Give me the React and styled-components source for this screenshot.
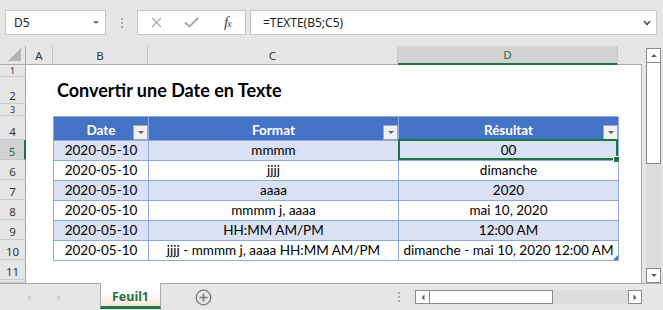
import styled, { createGlobalStyle } from 'styled-components';

const GlobalStyle = createGlobalStyle`
  html, body { margin: 0; padding: 0; background: #e6e6e6; }
  body { font-family: "Noto Sans", "Liberation Sans", sans-serif; overflow: hidden; }
`;

const Window = styled.div`
  width: 663px;
  height: 310px;
  display: flex;
  flex-direction: column;
  background: #e6e6e6;
  overflow: hidden;
`;

/* ---------- formula bar ---------- */

const FormulaBar = styled.div`
  height: 46px;
  box-sizing: border-box;
  padding: 10px 6px 0 5px;
  display: flex;
  align-items: flex-start;
`;

const Field = styled.div`
  height: 25px;
  box-sizing: border-box;
  background: #fff;
  border: 1px solid #c6c6c6;
  display: flex;
  align-items: center;
  font-size: 12px;
  color: #222;
`;

const NameBox = styled(Field)`
  width: 101px;
  padding: 0 6px 0 8px;
  justify-content: space-between;
`;

const DropTri = styled.span`
  width: 0;
  height: 0;
  border-left: 3px solid transparent;
  border-right: 3px solid transparent;
  border-top: 3px solid #707070;
`;

const Grip = styled.div`
  width: ${p => p.$w || 31}px;
  height: ${p => p.$h || 25}px;
  display: flex;
  flex-direction: column;
  align-items: center;
  justify-content: center;
  gap: 2px;
`;

const Dot = styled.span`
  width: 2px;
  height: 2px;
  background: #ababab;
`;

const FxBox = styled(Field)`
  width: 109px;
  padding-left: 1px;
`;

const Slot = styled.span`
  width: 36px;
  display: flex;
  align-items: center;
  justify-content: center;
`;

const Fx = styled.span`
  font-family: "Liberation Serif", serif;
  font-style: italic;
  font-size: 15px;
  color: #444;
  letter-spacing: -1px;
  sub {
    font-size: 10px;
    vertical-align: 0;
  }
`;

const FormulaInput = styled(Field)`
  flex: 1;
  margin-left: 4px;
  padding: 0 5px 0 12px;
  justify-content: space-between;
`;

/* ---------- sheet ---------- */

const Main = styled.div`
  display: flex;
  height: 237px;
`;

const Sheet = styled.div`
  width: 642px;
  display: grid;
  grid-template-columns: 26px 27px 95px 250px 220px 24px;
  grid-template-rows: 19px 12px 27px 12px 24px repeat(7, 20px) 3px;
`;

const Corner = styled.div`
  grid-column: 1;
  grid-row: 1;
  box-sizing: border-box;
  border-right: 1px solid #ababab;
  border-bottom: 1px solid #ababab;
  display: flex;
`;

const ColHeader = styled.div`
  grid-row: 1;
  box-sizing: border-box;
  display: flex;
  align-items: center;
  justify-content: center;
  font-size: 11.5px;
  color: ${p => (p.$active ? '#217346' : '#333')};
  background: ${p => (p.$active ? '#d2d2d2' : p.$blank ? 'transparent' : '#e6e6e6')};
  border-right: ${p => (p.$blank ? 'none' : '1px solid #c8c8c8')};
  border-bottom: ${p => (p.$active ? '2px solid #217346' : '1px solid #ababab')};
`;

const RowHeader = styled.div`
  grid-column: 1;
  grid-row: ${p => p.$row + 1};
  box-sizing: border-box;
  display: flex;
  align-items: ${p => (p.$short ? 'center' : 'flex-end')};
  justify-content: center;
  font-size: ${p => (p.$short ? 9 : 11.5)}px;
  line-height: ${p => (p.$short ? 10 : 15)}px;
  color: ${p => (p.$active ? '#217346' : '#333')};
  background: ${p => (p.$active ? '#d2d2d2' : '#e6e6e6')};
  border-bottom: 1px solid #c8c8c8;
  border-right: ${p => (p.$active ? '2px solid #217346' : '1px solid #ababab')};
`;

const Canvas = styled.div`
  grid-column: 2 / -1;
  grid-row: 2 / -1;
  background: #fff;
  box-sizing: border-box;
  border-right: 1px solid #ababab;
`;

const Title = styled.div`
  grid-column: 3 / 6;
  grid-row: 3;
  display: flex;
  align-items: flex-end;
  padding: 0 0 3px 4px;
  font-family: Lato, "Liberation Sans", sans-serif;
  font-weight: 700;
  font-size: 18px;
  line-height: 22px;
  color: #000;
  white-space: nowrap;
`;

const Table = styled.div`
  grid-column: 3 / 6;
  grid-row: 5 / 12;
  align-self: start;
  display: grid;
  grid-template-columns: 95px 250px 220px;
  grid-template-rows: 24px repeat(6, 20px);
  border-left: 1px solid #8ea9db;
  border-top: 1px solid #8ea9db;
  font-family: Lato, "Liberation Sans", sans-serif;
  font-size: 13.5px;
  line-height: 19px;
`;

const Cell = styled.div`
  position: relative;
  box-sizing: border-box;
  display: flex;
  align-items: flex-end;
  justify-content: center;
  white-space: nowrap;
  border-right: 1px solid #8ea9db;
  border-bottom: 1px solid #8ea9db;
  background: ${p => (p.$band ? '#d9e1f2' : '#ffffff')};
  color: #000;
`;

const HeadCell = styled(Cell)`
  background: #4472c4;
  color: #fff;
  font-weight: 700;
`;

const FilterButton = styled.span`
  position: absolute;
  right: 0;
  bottom: 0;
  width: 15px;
  height: 15px;
  box-sizing: border-box;
  background: #f1f1f1;
  border: 1px solid #a6a6a6;
  display: flex;
  align-items: center;
  justify-content: center;
`;

const Tri = styled.span`
  width: 0;
  height: 0;
  border-left: ${p => p.$size || 3}px solid transparent;
  border-right: ${p => p.$size || 3}px solid transparent;
  border-top: ${p => p.$size || 3}px solid ${p => p.$color || '#606060'};
  transform: rotate(${p => p.$rot || 0}deg);
`;

const Selection = styled.span`
  position: absolute;
  top: -2px;
  left: -1px;
  right: 0;
  bottom: 0;
  border: 2px solid #217346;
  z-index: 2;
`;

const FillHandle = styled.span`
  position: absolute;
  left: 215px;
  top: 16px;
  width: 5px;
  height: 5px;
  background: #217346;
  box-shadow: 0 0 0 1px #fff;
  z-index: 3;
`;

const ResizeMark = styled.span`
  position: absolute;
  right: 0;
  bottom: 0;
  width: 0;
  height: 0;
  border-left: 5px solid transparent;
  border-bottom: 5px solid #4472c4;
`;

/* ---------- scrollbars ---------- */

const VScroll = styled.div`
  width: 15px;
  margin: 2px 2px 0 4px;
  display: flex;
  flex-direction: column;
`;

const ScrollBtn = styled.div`
  flex: none;
  box-sizing: border-box;
  width: ${p => p.$w || 15}px;
  height: ${p => p.$h || 15}px;
  background: #fff;
  border: 1px solid #8a8a8a;
  display: flex;
  align-items: center;
  justify-content: center;
`;

const Thumb = styled.div`
  flex: none;
  box-sizing: border-box;
  background: #fff;
  border: 1px solid #8a8a8a;
  ${p => (p.$vertical ? `height: 102px; margin-top: -1px;` : `width: 124px; margin-left: -1px;`)}
`;

const Track = styled.div`
  flex: 1;
  background: #dcdcdc;
`;

/* ---------- sheet tabs ---------- */

const BottomBar = styled.div`
  height: 27px;
  box-sizing: border-box;
  border-top: 1px solid #ababab;
  display: flex;
  align-items: center;
`;

const Nav = styled.div`
  width: 100px;
  box-sizing: border-box;
  padding-left: 26px;
  display: flex;
  align-items: center;
  gap: 24px;
`;

const Tab = styled.div`
  align-self: flex-start;
  margin-top: -1px;
  width: 61px;
  height: 26px;
  box-sizing: border-box;
  padding-top: 3px;
  border-left: 1px solid #ababab;
  border-right: 1px solid #ababab;
  border-bottom: 3px solid #217346;
  background: linear-gradient(to bottom, #ffffff 35%, #fbe6d8);
  display: flex;
  align-items: center;
  justify-content: center;
  font-weight: 700;
  font-size: 12.5px;
  color: #217346;
`;

const AddSheet = styled.div`
  margin-left: 34px;
  display: flex;
`;

const Spacer = styled.div`
  flex: 1;
`;

const HScroll = styled.div`
  width: 227px;
  height: 14px;
  margin: 0 21px 0 15px;
  display: flex;
`;

const rows = [
  ['2020-05-10', 'mmmm', '00'],
  ['2020-05-10', 'jjjj', 'dimanche'],
  ['2020-05-10', 'aaaa', '2020'],
  ['2020-05-10', 'mmmm j, aaaa', 'mai 10, 2020'],
  ['2020-05-10', 'HH:MM AM/PM', '12:00 AM'],
  ['2020-05-10', 'jjjj - mmmm j, aaaa HH:MM AM/PM', 'dimanche - mai 10, 2020 12:00 AM'],
];

const headers = ['Date', 'Format', 'Résultat'];

const shortRows = [1, 3];

export default function App() {
  return (
    <>
      <GlobalStyle />
      <Window>
        <FormulaBar>
          <NameBox>
            D5
            <DropTri />
          </NameBox>
          <Grip>
            <Dot />
            <Dot />
            <Dot />
          </Grip>
          <FxBox>
            <Slot>
              <svg width="11" height="11" viewBox="0 0 11 11">
                <path d="M1 1 L10 10 M10 1 L1 10" stroke="#a8a8a8" strokeWidth="1.3" fill="none" />
              </svg>
            </Slot>
            <Slot>
              <svg width="15" height="11" viewBox="0 0 15 11">
                <path d="M1 5.5 L5.5 9.5 L14 1" stroke="#a8a8a8" strokeWidth="2" fill="none" />
              </svg>
            </Slot>
            <Slot>
              <Fx>
                f<sub>x</sub>
              </Fx>
            </Slot>
          </FxBox>
          <FormulaInput>
            =TEXTE(B5;C5)
            <svg width="8" height="6" viewBox="0 0 8 6">
              <path d="M1 1 L4 4.5 L7 1" stroke="#555" strokeWidth="1.6" fill="none" />
            </svg>
          </FormulaInput>
        </FormulaBar>

        <Main>
          <Sheet>
            <Corner>
              <svg width="25" height="18" viewBox="0 0 25 18">
                <polygon points="8,15 21,15 21,2" fill="#b4b4b4" />
              </svg>
            </Corner>
            {['A', 'B', 'C', 'D'].map(c => (
              <ColHeader key={c} $active={c === 'D'}>
                {c}
              </ColHeader>
            ))}
            <ColHeader $blank />
            {Array.from({ length: 12 }, (_, i) => i + 1).map(r => (
              <RowHeader key={r} $row={r} $active={r === 5} $short={shortRows.includes(r)}>
                {r < 12 ? r : ''}
              </RowHeader>
            ))}
            <Canvas />
            <Title>Convertir une Date en Texte</Title>
            <Table>
              {headers.map(h => (
                <HeadCell key={h}>
                  {h}
                  <FilterButton>
                    <Tri $size={3.5} />
                  </FilterButton>
                </HeadCell>
              ))}
              {rows.map((row, i) =>
                row.map((v, j) => (
                  <Cell key={`${i}-${j}`} $band={i % 2 === 0}>
                    {v}
                    {i === 0 && j === 2 && (
                      <>
                        <Selection />
                        <FillHandle />
                      </>
                    )}
                    {i === rows.length - 1 && j === 2 && <ResizeMark />}
                  </Cell>
                ))
              )}
            </Table>
          </Sheet>
          <VScroll>
            <ScrollBtn>
              <Tri $size={3.5} $rot={180} />
            </ScrollBtn>
            <Thumb $vertical />
            <Track />
            <ScrollBtn>
              <Tri $size={3.5} />
            </ScrollBtn>
          </VScroll>
        </Main>

        <BottomBar>
          <Nav>
            <Tri $size={3.5} $color="#c4c4c4" $rot={90} />
            <Tri $size={3.5} $color="#c4c4c4" $rot={-90} />
          </Nav>
          <Tab>Feuil1</Tab>
          <AddSheet>
            <svg width="17" height="17" viewBox="0 0 17 17">
              <circle cx="8.5" cy="8.5" r="7.3" stroke="#777" strokeWidth="1.3" fill="none" />
              <path d="M8.5 4.5 V12.5 M4.5 8.5 H12.5" stroke="#777" strokeWidth="1.5" />
            </svg>
          </AddSheet>
          <Spacer />
          <Grip $w={2} $h={14}>
            <Dot />
            <Dot />
            <Dot />
          </Grip>
          <HScroll>
            <ScrollBtn $w={15} $h={14}>
              <Tri $size={3.5} $rot={90} />
            </ScrollBtn>
            <Thumb />
            <Track />
            <ScrollBtn $w={14} $h={14}>
              <Tri $size={3.5} $rot={-90} />
            </ScrollBtn>
          </HScroll>
        </BottomBar>
      </Window>
    </>
  );
}
